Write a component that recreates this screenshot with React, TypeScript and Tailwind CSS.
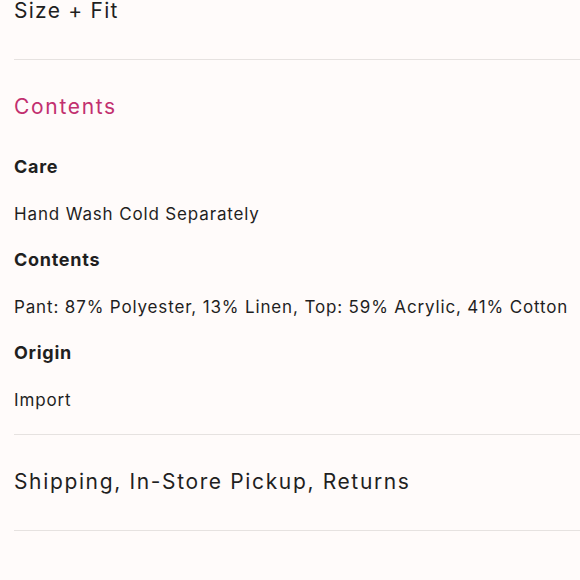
export default function App() {
  const details = [
    { label: 'Care', value: 'Hand Wash Cold Separately' },
    { label: 'Contents', value: 'Pant: 87% Polyester, 13% Linen, Top: 59% Acrylic, 41% Cotton' },
    { label: 'Origin', value: 'Import' },
  ];

  return (
    <div className="w-[580px] h-[580px] overflow-hidden bg-[#fffbfa] pl-[14px] text-[#1f1f1f] font-['Inter',sans-serif]">
      <div className="border-b border-[#e6e2e0] h-[60px] pt-[1px]">
        <h2 className="text-[21px] leading-[20px] tracking-[0.06em]">Size + Fit</h2>
      </div>

      <div className="border-b border-[#e6e2e0] pt-[33px] pb-[11px]">
        <h2 className="text-[21px] leading-[28px] tracking-[0.08em] text-[#c2306f] mb-[23px]">Contents</h2>
        {details.map((d) => (
          <div key={d.label}>
            <p className="text-[18px] leading-[46.5px] font-bold tracking-[0.04em]">{d.label}</p>
            <p className="text-[17px] leading-[46.5px] tracking-[0.05em]">{d.value}</p>
          </div>
        ))}
      </div>

      <div className="border-b border-[#e6e2e0] h-[96px] pt-[35px]">
        <h2 className="text-[21px] leading-[24px] tracking-[0.078em]">Shipping, In-Store Pickup, Returns</h2>
      </div>
    </div>
  );
}
